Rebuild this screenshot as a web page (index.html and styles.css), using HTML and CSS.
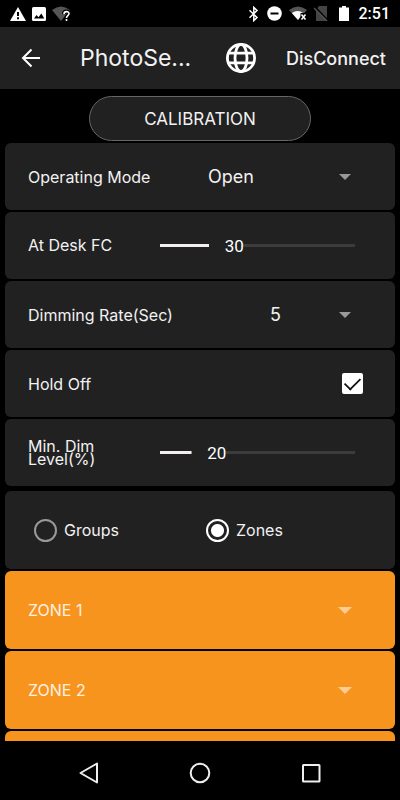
FILE: index.html
```html
<!DOCTYPE html>
<html lang="en">
<head>
<meta charset="utf-8">
<meta name="viewport" content="width=device-width, initial-scale=1">
<title>PhotoSensor</title>
<link rel="stylesheet" href="styles.css">
</head>
<body>
<div class="status">
  <div class="status-group">
    <svg width="16" height="16" viewBox="0 0 16 16"><path fill="#fff" d="M8 1 16 15H0Z"/><path fill="#000" d="M7 6h2v4H7zM7 11.300h2v2H7z"/></svg>
    <svg width="14" height="14" viewBox="0 0 14 14"><rect width="14" height="14" rx="1.500" fill="#fff"/><path fill="#000" d="M2 11.500 4.500 8l2 2.200L9.300 6.500l3 5z"/></svg>
    <svg width="19" height="16" viewBox="0 0 19 16"><path fill="#555" d="M0 4Q9 -3 18 4L9 15Z"/><path fill="none" stroke="#000" stroke-width="4" d="M12 8c0-3.500 5-3.300 5-.4 0 2-2.500 2-2.500 4.300v2.300"/><path fill="none" stroke="#fff" stroke-width="1.600" d="M12 8c0-3.200 5-3 5-.4 0 2-2.500 2-2.500 4.300M14.500 13.100v1.800"/></svg>
  </div>
  <div class="status-group status-right">
    <svg width="12" height="16" viewBox="0 0 12 16"><path fill="none" stroke="#fff" stroke-width="1.500" d="M1.500 4.300 9 11.500 5.800 14.600V1.400L9 4.500 1.500 11.700"/></svg>
    <svg width="15" height="15" viewBox="0 0 15 15"><circle cx="7.500" cy="7.500" r="7.300" fill="#fff"/><path fill="#000" d="M3.500 6.500h8v2h-8z"/></svg>
    <svg width="18" height="15" viewBox="0 0 18 15"><path fill="#555" d="M0 4Q9 -3 18 4L9 14Z"/><path fill="#fff" d="M2.800 7Q9 3 14 7L9 14Z"/><path fill="#000" d="M11.500 7H18v8h-6.500z"/><path stroke="#fff" stroke-width="1.500" d="m12.500 8.500 4 5m0-5-4 5"/></svg>
    <svg width="14" height="15" viewBox="0 0 14 15"><path fill="#444" d="M5 0h8v15H2V4z"/><path stroke="#000" stroke-width="2.500" d="M1 1.500 14 15"/><path stroke="#555" stroke-width="1.500" d="M0 2 13 15"/></svg>
    <svg class="battery" width="10" height="15" viewBox="0 0 10 15"><path fill="#fff" d="M3 0h4v1.500h3V15H0V1.500h3z"/></svg>
    <time>2:51</time>
  </div>
</div>

<header class="appbar">
  <button class="icon-button" aria-label="Back"><svg width="20" height="20" viewBox="0 0 20 20"><path fill="none" stroke="#fff" stroke-width="2" d="M19 10H2M10.500 1.500 2 10l8.500 8.500"/></svg></button>
  <h1>PhotoSe...</h1>
  <button class="icon-button globe" aria-label="Language"><svg width="30" height="30" viewBox="0 0 30 30"><g fill="none" stroke="#fff" stroke-width="2.800"><circle cx="15" cy="15" r="13.600"/><ellipse cx="15" cy="15" rx="6" ry="13.600"/><path d="M2.500 10.200h25M2.500 19.800h25"/></g></svg></button>
  <button class="disconnect">DisConnect</button>
</header>

<main class="content">
  <button class="calibration">CALIBRATION</button>
  <div class="card">
    <label for="mode">Operating Mode</label>
    <div class="picker">
      <select id="mode"><option>Open</option></select>
      <svg class="caret" width="12" height="6" viewBox="0 0 12 6"><path d="M0 0h12L6 6z"/></svg>
    </div>
  </div>
  <div class="card">
    <label class="short" for="desk">At Desk FC</label>
    <div class="slider" style="--pos: 38%">
      <input id="desk" type="range" min="0" max="100" value="30">
      <output for="desk">30</output>
    </div>
  </div>
  <div class="card">
    <label for="rate">Dimming Rate(Sec)</label>
    <div class="picker centered">
      <select id="rate"><option>5</option></select>
      <svg class="caret" width="12" height="6" viewBox="0 0 12 6"><path d="M0 0h12L6 6z"/></svg>
    </div>
  </div>
  <div class="card">
    <label for="hold">Hold Off</label>
    <input id="hold" class="check" type="checkbox" checked>
  </div>
  <div class="card">
    <label class="short" for="dim">Min. Dim Level(%)</label>
    <div class="slider" style="--pos: 29%">
      <input id="dim" type="range" min="0" max="100" value="20">
      <output for="dim">20</output>
    </div>
  </div>
  <div class="card choices">
    <label><input type="radio" name="view">Groups</label>
    <label><input type="radio" name="view" checked>Zones</label>
  </div>
  <button class="zone">ZONE 1<svg width="14" height="7" viewBox="0 0 14 7"><path d="M0 0h14L7 7z"/></svg></button>
  <button class="zone">ZONE 2<svg width="14" height="7" viewBox="0 0 14 7"><path d="M0 0h14L7 7z"/></svg></button>
  <button class="zone" aria-label="Next zone"></button>
</main>

<nav class="navbar">
  <button aria-label="Back"><svg width="22" height="22" viewBox="0 0 22 22"><path d="M19 1.500v19L2.500 11z"/></svg></button>
  <button aria-label="Home"><svg width="22" height="22" viewBox="0 0 22 22"><circle cx="11" cy="11" r="9.300"/></svg></button>
  <button aria-label="Overview"><svg width="22" height="22" viewBox="0 0 22 22"><rect x="3" y="3" width="16.500" height="16.500" rx=".5"/></svg></button>
</nav>
</body>
</html>
```
FILE: styles.css
```css
* { box-sizing: border-box; }
body {
  margin: 0;
  height: 100vh;
  display: flex;
  flex-direction: column;
  background: #000;
  color: #f2f2f2;
  font: 16px Inter, sans-serif;
}
button, select, input { margin: 0; font: inherit; color: inherit; }
button { padding: 0; border: 0; background: none; }
svg { display: block; flex: none; }

.status {
  flex: none;
  height: 27px;
  padding: 0 10px;
  display: flex;
  justify-content: space-between;
  align-items: center;
}
.status-group { display: flex; align-items: center; gap: 6px; }
.status-right { gap: 7px; }
.battery { margin: 0 3px 0 4px; }
time { font: 500 16px/20px Roboto, sans-serif; color: #fff; }

.appbar {
  flex: none;
  height: 62px;
  padding: 0 14px 0 21px;
  display: flex;
  align-items: center;
  background: #212121;
}
h1 {
  flex: 1;
  margin: 0 0 0 39px;
  font-size: 23px;
  font-weight: 400;
}
.globe { margin-right: 30px; }
.disconnect { font-size: 18px; font-weight: 500; }

.content {
  flex: 1;
  min-height: 0;
  padding: 7px 5px 0;
  display: flex;
  flex-direction: column;
  gap: 2px;
  overflow: auto;
  scrollbar-width: none;
}
.calibration {
  flex: none;
  align-self: center;
  width: 57%;
  height: 45px;
  border: 1px solid #666;
  border-radius: 23px;
  background: #212121;
  font-size: 17px;
}
.card {
  flex: none;
  height: 67px;
  padding: 0 28px 0 23px;
  display: flex;
  justify-content: space-between;
  align-items: center;
  border-radius: 6px;
  background: #212121;
}
.short { width: 39%; padding-right: 40px; line-height: 13px; }

.picker { position: relative; width: 54%; }
.picker select {
  width: 100%;
  height: 40px;
  padding: 0 24px;
  border: 0;
  appearance: none;
  background: none;
  font-size: 18px;
}
.centered select { text-align-last: center; }
.caret {
  position: absolute;
  right: 16px;
  top: 17px;
  fill: #999;
  pointer-events: none;
}

.slider { position: relative; flex: 1; margin-right: 12px; }
.slider input {
  display: block;
  width: 100%;
  height: 24px;
  appearance: none;
  background:
    linear-gradient(#f3eef0, #f3eef0) left center / calc(var(--pos) - 25px) 3px no-repeat,
    linear-gradient(#3c3c3c, #3c3c3c) right center / calc(100% - var(--pos) - 9px) 3px no-repeat;
}
.slider input::-webkit-slider-thumb {
  appearance: none;
  width: 48px;
  height: 24px;
  background: transparent;
}
.slider output {
  position: absolute;
  left: var(--pos);
  top: 0;
  transform: translateX(-50%);
  font: 400 17px/24px Roboto, sans-serif;
  color: #fff;
  pointer-events: none;
}

.check {
  appearance: none;
  width: 21px;
  height: 21px;
  margin-right: 4px;
  display: grid;
  place-items: center;
  border-radius: 2px;
  background: #fff;
}
.check:checked::before {
  content: "";
  width: 15px;
  height: 8px;
  margin-bottom: 4px;
  border: solid #111;
  border-width: 0 0 2px 2px;
  transform: rotate(-45deg) scale(.9);
}

.choices {
  height: 78px;
  margin-top: 3px;
  padding: 0 17px 0 29px;
  justify-content: flex-start;
}
.choices label { width: 50%; display: flex; align-items: center; gap: 7px; }
.choices input {
  appearance: none;
  width: 23px;
  height: 23px;
  border: 2px solid #999;
  border-radius: 50%;
}
.choices input:checked {
  border-color: #fff;
  background: radial-gradient(circle, #fff 6px, transparent 7px);
}

.zone {
  flex: none;
  height: 78px;
  padding: 0 43px 0 23px;
  display: flex;
  justify-content: space-between;
  align-items: center;
  border-radius: 6px;
  background: #f7941e;
  color: #fff0e0;
}
.zone svg { fill: #ffcb92; }

.navbar {
  flex: none;
  height: 59px;
  padding: 5px 33px 0;
  display: grid;
  grid-template-columns: repeat(3, 1fr);
  place-items: center;
}
.navbar svg { fill: none; stroke: #eee; stroke-width: 2; stroke-linejoin: round; }
```
